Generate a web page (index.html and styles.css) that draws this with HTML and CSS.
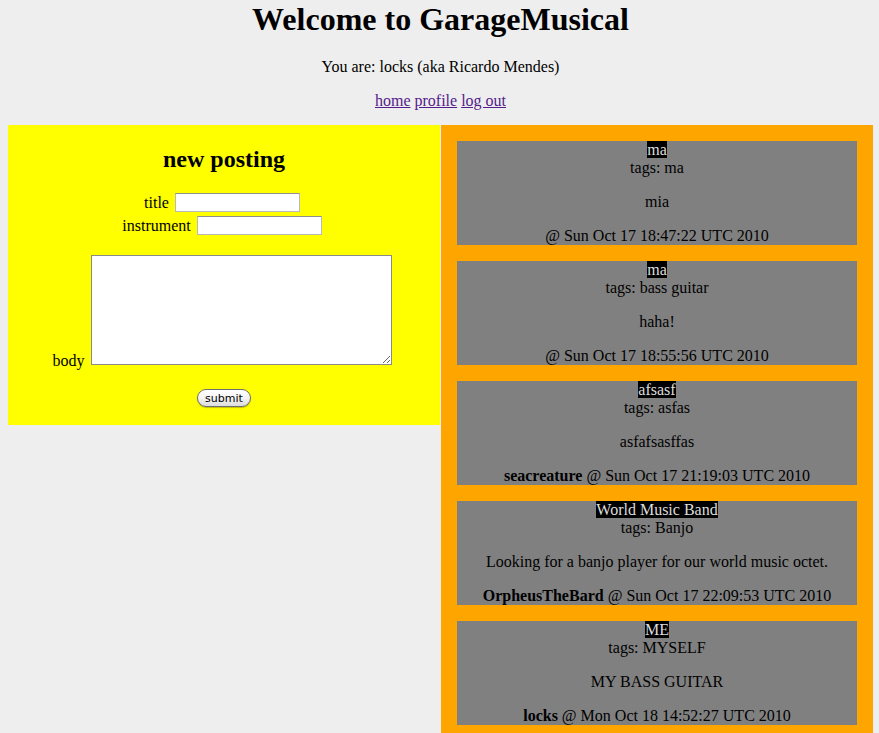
FILE: index.html
```html
<!DOCTYPE html>
<html>
<head>
<meta charset="utf-8">
<title>GarageMusical</title>
<link rel="stylesheet" href="styles.css">
</head>
<body>
<h1 class="title">Welcome to GarageMusical</h1>
<p class="whoami">You are: locks (aka Ricardo Mendes)</p>
<p class="nav"><a href="#">home</a> <a href="#">profile</a> <a href="#">log out</a></p>
<div class="columns">
  <div class="newpost">
    <h2 class="newpost-title">new posting</h2>
    <form class="form">
      <div class="row"><label>title</label><input type="text" class="field"></div>
      <div class="row"><label>instrument</label><input type="text" class="field"></div>
      <div class="row row-body"><label>body</label><textarea class="body-area"></textarea></div>
      <div class="row-submit"><button type="button" class="submit">submit</button></div>
    </form>
  </div>
  <div class="feed">
    <div class="post">
      <div class="post-head"><span class="post-title">ma</span></div>
      <div class="post-tags">tags: ma</div>
      <div class="post-body">mia</div>
      <div class="post-foot">@ Sun Oct 17 18:47:22 UTC 2010</div>
    </div>
    <div class="post">
      <div class="post-head"><span class="post-title">ma</span></div>
      <div class="post-tags">tags: bass guitar</div>
      <div class="post-body">haha!</div>
      <div class="post-foot">@ Sun Oct 17 18:55:56 UTC 2010</div>
    </div>
    <div class="post">
      <div class="post-head"><span class="post-title">afsasf</span></div>
      <div class="post-tags">tags: asfas</div>
      <div class="post-body">asfafsasffas</div>
      <div class="post-foot"><b>seacreature</b> @ Sun Oct 17 21:19:03 UTC 2010</div>
    </div>
    <div class="post">
      <div class="post-head"><span class="post-title">World Music Band</span></div>
      <div class="post-tags">tags: Banjo</div>
      <div class="post-body">Looking for a banjo player for our world music octet.</div>
      <div class="post-foot"><b>OrpheusTheBard</b> @ Sun Oct 17 22:09:53 UTC 2010</div>
    </div>
    <div class="post">
      <div class="post-head"><span class="post-title">ME</span></div>
      <div class="post-tags">tags: MYSELF</div>
      <div class="post-body">MY BASS GUITAR</div>
      <div class="post-foot"><b>locks</b> @ Mon Oct 18 14:52:27 UTC 2010</div>
    </div>
  </div>
</div>
</body>
</html>
```

FILE: styles.css
```css
html, body {
  background: #eeeeee;
}
body {
  margin: 0 6px 0 8px;
  font-family: "Liberation Serif", "Times New Roman", serif;
  font-size: 16px;
  color: #000;
  line-height: 18px;
}
.title {
  margin: 0;
  font-size: 32px;
  line-height: 38px;
  font-weight: bold;
  text-align: center;
}
.whoami {
  margin: 20px 0 0;
  text-align: center;
}
.nav {
  margin: 16px 0 0;
  text-align: center;
}
.nav a {
  color: #551a8b;
  text-decoration: underline;
}
.columns {
  margin-top: 15px;
  display: grid;
  grid-template-columns: 432px 432px;
  column-gap: 1px;
  align-items: start;
}
.newpost {
  background: #ffff00;
  padding: 20px 0 18px;
  min-width: 0;
}
.newpost-title {
  margin: 0 0 20px;
  font-size: 24px;
  line-height: 28px;
  text-align: center;
}
.form {
  margin: 0;
}
.row {
  display: flex;
  justify-content: center;
  align-items: flex-start;
  gap: 6px;
  height: 23px;
}
.row label {
  line-height: 18px;
  margin-top: 1px;
}
.field {
  box-sizing: border-box;
  width: 125px;
  height: 19px;
  margin: 0 4px 0 0;
  padding: 0 2px;
  border: 1px solid #b9b9b9;
  border-top-color: #8f8f8f;
  background: #fff;
  font-size: 13px;
}
.row-body {
  height: auto;
  margin-top: 16px;
  align-items: flex-end;
}
.row-body label {
  margin-top: 0;
  margin-bottom: -2px;
}
.body-area {
  box-sizing: border-box;
  width: 301px;
  height: 110px;
  margin: 0 4px 3px 0;
  border: 1px solid #8a8a8a;
  background: #fff;
  padding: 2px;
  font-size: 13px;
}
.row-submit {
  margin-top: 21px;
  height: 18px;
  display: flex;
  justify-content: center;
}
.submit {
  box-sizing: border-box;
  width: 54px;
  height: 18px;
  padding: 0;
  border: 1px solid #6f6f6f;
  border-radius: 9px;
  background: linear-gradient(#ffffff, #f4f4f4 50%, #dcdcdc);
  font-family: "DejaVu Sans", "Liberation Sans", sans-serif;
  font-size: 11px;
  line-height: 15px;
  color: #000;
  box-shadow: 0 1px 1px rgba(0,0,0,0.25);
}
.feed {
  background: #ffa500;
  padding: 16px 16px 0;
  min-height: 620px;
  min-width: 0;
}
.post {
  background: #808080;
  text-align: center;
  margin-bottom: 16px;
}
.post-title {
  background: #000;
  color: #dcdcdc;
}
.post-body {
  margin-top: 16px;
}
.post-foot {
  margin-top: 16px;
}
```
